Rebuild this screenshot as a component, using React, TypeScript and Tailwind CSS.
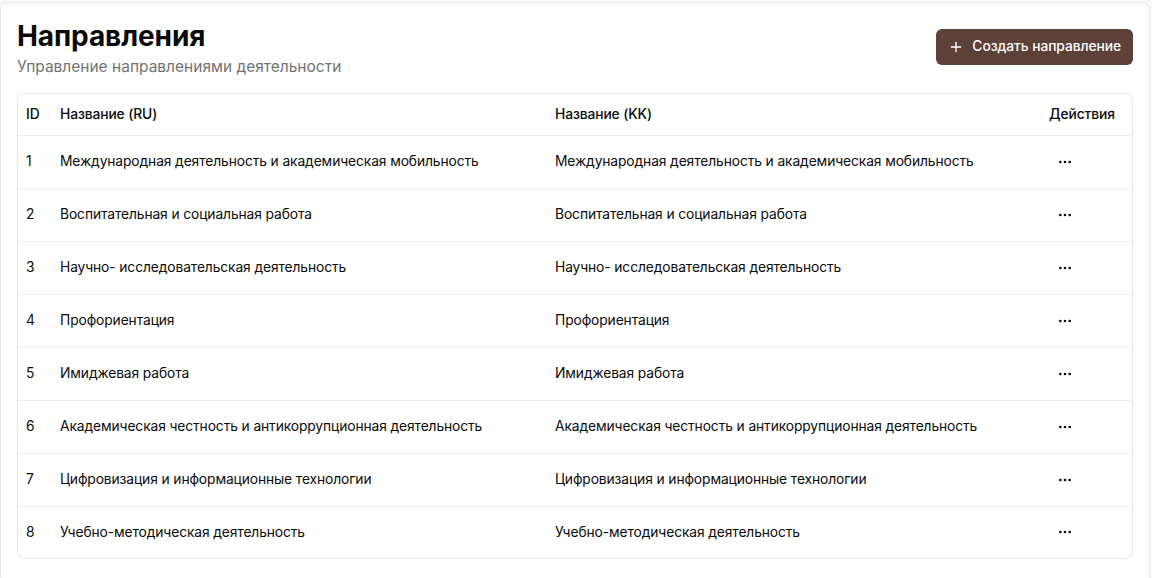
import React from 'react';
import { Plus, Ellipsis } from "lucide-react";

const directions = [
  { id: 1, ru: "Международная деятельность и академическая мобильность", kk: "Международная деятельность и академическая мобильность" },
  { id: 2, ru: "Воспитательная и социальная работа", kk: "Воспитательная и социальная работа" },
  { id: 3, ru: "Научно- исследовательская деятельность", kk: "Научно- исследовательская деятельность" },
  { id: 4, ru: "Профориентация", kk: "Профориентация" },
  { id: 5, ru: "Имиджевая работа", kk: "Имиджевая работа" },
  { id: 6, ru: "Академическая честность и антикоррупционная деятельность", kk: "Академическая честность и антикоррупционная деятельность" },
  { id: 7, ru: "Цифровизация и информационные технологии", kk: "Цифровизация и информационные технологии" },
  { id: 8, ru: "Учебно-методическая деятельность", kk: "Учебно-методическая деятельность" },
];

export default function App() {
  return (
    <div className="h-[578px] w-full overflow-hidden bg-[#f8f8f8] pt-[2px] font-['Inter',sans-serif] text-[#0a0a0a]">
      <div className="w-[1150px] rounded-lg border border-[#e6e6e6] bg-white px-4 pt-[15px] pb-6">
        {/* Page header */}
        <div className="flex items-center justify-between">
          <div>
            <h1 className="text-[28px] font-bold leading-9 tracking-[-0.003em]">Направления</h1>
            <p className="mt-px text-[15.5px] leading-6 text-[#737373]">Управление направлениями деятельности</p>
          </div>
          <button className="-mt-1 flex h-9 items-center gap-2 rounded-md bg-[#5d4037] px-3 text-[13.8px] font-medium tracking-[-0.005em] text-white">
            <Plus className="h-4 w-4" />
            Создать направление
          </button>
        </div>

        {/* Table */}
        <div className="mt-[14px] overflow-hidden rounded-lg border border-[#e6e6e6]">
          <table className="w-full table-fixed text-[13.8px] tracking-[-0.1px]">
            <colgroup>
              <col className="w-[34px]" />
              <col className="w-[495px]" />
              <col className="w-[494px]" />
              <col />
            </colgroup>
            <thead>
              <tr className="h-[41px] border-b border-[#ececec]">
                <th className="px-2 text-left font-medium">ID</th>
                <th className="px-2 text-left font-medium">Название (RU)</th>
                <th className="px-2 text-left font-medium">Название (KK)</th>
                <th className="px-2 text-left font-medium">Действия</th>
              </tr>
            </thead>
            <tbody>
              {directions.map((d, i) => (
                <tr
                  key={d.id}
                  className={i < directions.length - 1 ? "h-[53px] border-b border-[#ececec]" : "h-[52px]"}
                >
                  <td className="px-2">{d.id}</td>
                  <td className="px-2">{d.ru}</td>
                  <td className="px-2">{d.kk}</td>
                  <td className="px-2">
                    <button className="flex h-8 w-8 items-center justify-center rounded-md">
                      <Ellipsis className="h-4 w-4" />
                    </button>
                  </td>
                </tr>
              ))}
            </tbody>
          </table>
        </div>
      </div>
    </div>
  );
}
